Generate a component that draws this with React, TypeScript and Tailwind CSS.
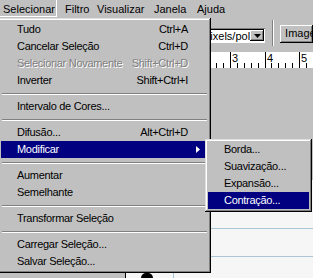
import React from "react";

type Entry =
  | { sep: true }
  | { label: string; keys?: string; disabled?: boolean; active?: boolean; sub?: boolean };

const selecionar: Entry[] = [
  { label: "Tudo", keys: "Ctrl+A" },
  { label: "Cancelar Seleção", keys: "Ctrl+D" },
  { label: "Selecionar Novamente", keys: "Shift+Ctrl+D", disabled: true },
  { label: "Inverter", keys: "Shift+Ctrl+I" },
  { sep: true },
  { label: "Intervalo de Cores..." },
  { sep: true },
  { label: "Difusão...", keys: "Alt+Ctrl+D" },
  { label: "Modificar", sub: true, active: true },
  { sep: true },
  { label: "Aumentar" },
  { label: "Semelhante" },
  { sep: true },
  { label: "Transformar Seleção" },
  { sep: true },
  { label: "Carregar Seleção..." },
  { label: "Salvar Seleção..." },
];

const modificar = [
  { label: "Borda..." },
  { label: "Suavização..." },
  { label: "Expansão..." },
  { label: "Contração...", active: true },
];

const bevel =
  "shadow-[inset_-1px_-1px_0_#000,inset_1px_1px_0_#dfdfdf,inset_-2px_-2px_0_#808080,inset_2px_2px_0_#fff]";

function MenuBar() {
  return (
    <div className="flex h-[18px] whitespace-nowrap">
      <div className="w-[57px] h-[17px] pl-[3px] pt-[2px] leading-[15px] border-r border-b border-white">
        Selecionar
      </div>
      <div className="w-[34px] pl-[8px] pt-[2px] leading-[15px]">Filtro</div>
      <div className="w-[57px] pl-[6px] pt-[2px] leading-[15px]">Visualizar</div>
      <div className="w-[43px] pl-[6px] pt-[2px] leading-[15px]">Janela</div>
      <div className="w-[40px] pl-[6px] pt-[2px] leading-[15px]">Ajuda</div>
    </div>
  );
}

function Toolbar() {
  return (
    <div className="flex items-start h-[34px] pl-[199px] whitespace-nowrap">
      <div className="mt-[10px] w-[78px] h-[15px] flex bg-white shadow-[inset_1px_1px_0_#808080,inset_-1px_-1px_0_#fff,inset_2px_2px_0_#000]">
        <div className="flex-1 pl-[4px] pt-[2px] leading-[13px]">Pixels/pol</div>
        <div className="mt-[2px] mr-[1px] w-[14px] h-[11px] bg-[#c0c0c0] flex items-center justify-center shadow-[inset_-1px_-1px_0_#000,inset_1px_1px_0_#fff,inset_-2px_-2px_0_#808080]">
          <svg width="7" height="4" viewBox="0 0 7 4">
            <polygon points="0,0 7,0 3.5,4" fill="#000" />
          </svg>
        </div>
      </div>
      <div className="mt-[2px] ml-[7px] w-[2px] h-[26px] border-l border-[#808080] border-r border-r-white" />
      <div className="mt-[7px] ml-[6px] w-[40px] h-[18px] pl-[5px] pt-[2px] leading-[13px] overflow-hidden shadow-[inset_-1px_-1px_0_#000,inset_1px_1px_0_#fff,inset_-2px_-2px_0_#808080]">
        Imagem
      </div>
    </div>
  );
}

function Ruler() {
  const step = 34.5;
  const ticks: React.ReactNode[] = [];
  for (let i = 0; i <= 27; i++) {
    const x = 105 - 3 * step + (i * step) / 5;
    const major = i % 5 === 0;
    ticks.push(
      <line
        key={i}
        x1={Math.round(x) + 0.5}
        x2={Math.round(x) + 0.5}
        y1={major ? 0 : 11}
        y2={16}
        stroke="#000"
        strokeWidth={1}
      />
    );
    if (major) {
      ticks.push(
        <text key={"t" + i} x={Math.round(x) + 2} y={10} fontSize="11" fontFamily="Liberation Sans, Arial, sans-serif">
          {i / 5}
        </text>
      );
    }
  }
  return (
    <div className="pl-[125px] h-[16px]">
      <svg width="188" height="16" className="block bg-white">
        {ticks}
      </svg>
    </div>
  );
}

function Canvas() {
  return (
    <div className="ml-[125px] h-[98px] bg-[#f6f6f6] border-l border-black flex flex-col">
      <div className="h-[49px] border-b border-[#aac6d6]" />
      <div className="h-[28px] border-b border-[#aac6d6]" />
      <div className="flex-1 relative">
        <div className="absolute left-[15px] bottom-0 w-[12px] h-[5px] rounded-t-full bg-black" />
        <div className="absolute left-[47px] top-0 bottom-0 w-px bg-[#aac6d6]" />
      </div>
    </div>
  );
}

function Dropdown() {
  return (
    <div className={`absolute left-[-2px] top-[18px] w-[213px] p-[3px] bg-[#c0c0c0] whitespace-nowrap tracking-[-0.3px] ${bevel}`}>
      {selecionar.map((e, i) =>
        "sep" in e ? (
          <div key={i} className="h-[9px] pt-[4px] px-[1px]">
            <div className="h-[2px] border-t border-[#808080] border-b border-b-white" />
          </div>
        ) : (
          <div
            key={i}
            className={`relative flex justify-between h-[17px] leading-[17px] pl-[16px] pr-[20px] ${
              e.active ? "bg-[#000080] text-white" : ""
            } ${e.disabled ? "text-[#808080] [text-shadow:1px_1px_0_#fff]" : ""}`}
          >
            <span>{e.label}</span>
            {e.keys && <span>{e.keys}</span>}
            {e.sub && (
              <svg className="absolute right-[8px] top-[5px]" width="4" height="7" viewBox="0 0 4 7">
                <polygon points="0,0 4,3.5 0,7" fill="#fff" />
              </svg>
            )}
          </div>
        )
      )}
    </div>
  );
}

function Submenu() {
  return (
    <div className={`absolute left-[205px] top-[139px] w-[107px] p-[3px] pt-[2px] bg-[#c0c0c0] whitespace-nowrap tracking-[-0.3px] ${bevel}`}>
      {modificar.map((e, i) => (
        <div
          key={i}
          className={`h-[17px] leading-[17px] pl-[16px] ${e.active ? "bg-[#000080] text-white" : ""}`}
        >
          {e.label}
        </div>
      ))}
    </div>
  );
}

export default function App() {
  return (
    <div className="relative w-[313px] h-[278px] overflow-hidden bg-[#c0c0c0] font-['Liberation_Sans',Arial,sans-serif] text-[11px] text-black">
      <MenuBar />
      <Toolbar />
      <Ruler />
      <div className="h-[112px]" />
      <Canvas />
      <Dropdown />
      <Submenu />
    </div>
  );
}
